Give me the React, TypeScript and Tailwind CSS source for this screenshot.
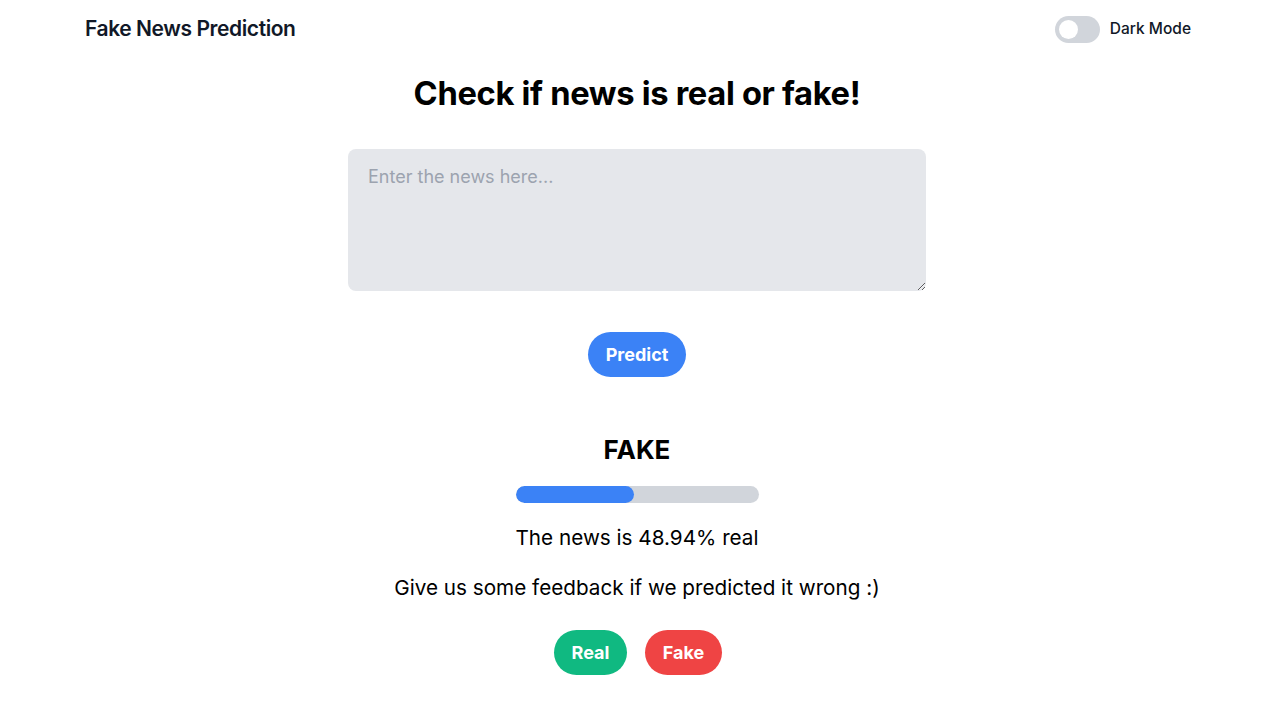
import React from "react";

export default function App() {
  return (
    <div className="min-h-screen bg-white text-black" style={{ fontFamily: "Inter, 'Noto Sans', sans-serif" }}>
      <header className="flex items-center justify-between pl-[85px] pr-[89px] h-[58px]">
        <h1 className="text-[21px] font-semibold tracking-[-0.02em] text-[#111827]">Fake News Prediction</h1>
        <div className="flex items-center gap-[10px]">
          <div className="w-[45px] h-[27px] rounded-full bg-[#d1d5db] flex items-center px-[4px]">
            <div className="w-[19px] h-[19px] rounded-full bg-white" />
          </div>
          <span className="text-[15.5px] font-medium text-[#111827]">Dark Mode</span>
        </div>
      </header>
      <main className="flex flex-col items-center pr-[6px]">
        <h2 className="mt-[14px] text-[32.7px] leading-[42px] font-bold tracking-[-0.01em]">Check if news is real or fake!</h2>
        <textarea
          placeholder="Enter the news here..."
          className="mt-[35px] w-[578px] h-[142px] rounded-lg bg-[#e5e7eb] px-5 py-[14px] text-[18px] placeholder-[#9ca3af] outline-none"
        />
        <button className="mt-[41px] h-[45px] px-[18px] rounded-full bg-[#3b82f6] text-white text-[18px] font-bold">Predict</button>
        <div className="mt-[56px] text-[26px] leading-[34px] font-bold">FAKE</div>
        <div className="mt-[19px] w-[243px] h-[17px] rounded-full bg-[#d1d5db] overflow-hidden">
          <div className="h-full rounded-full bg-[#3b82f6]" style={{ width: "48.94%" }} />
        </div>
        <p className="mt-[19px] text-[20.7px] leading-[32px]">The news is 48.94% real</p>
        <p className="mt-[18px] text-[20.7px] leading-[32px]">Give us some feedback if we predicted it wrong :)</p>
        <div className="mt-[26px] flex gap-[18px] pl-[2px]">
          <button className="h-[45px] w-[73px] rounded-full bg-[#10b981] text-white text-[18px] font-bold">Real</button>
          <button className="h-[45px] w-[77px] rounded-full bg-[#ef4444] text-white text-[18px] font-bold">Fake</button>
        </div>
      </main>
    </div>
  );
}
